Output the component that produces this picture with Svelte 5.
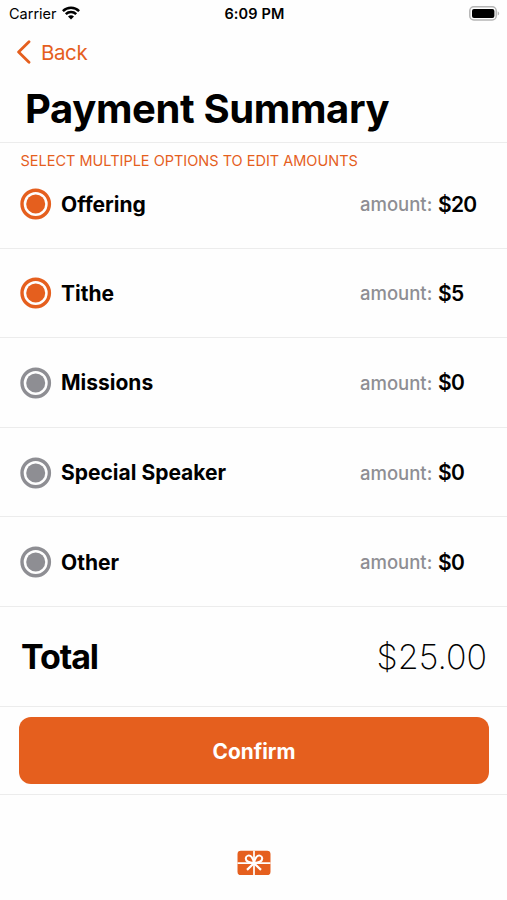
<script lang="ts">
  let funds = [
    { name: 'Offering', amount: 20, selected: true },
    { name: 'Tithe', amount: 5, selected: true },
    { name: 'Missions', amount: 0, selected: false },
    { name: 'Special Speaker', amount: 0, selected: false },
    { name: 'Other', amount: 0, selected: false },
  ];

  $: total = funds.reduce((sum, fund) => sum + fund.amount, 0);

  function toggle(index: number) {
    funds[index].selected = !funds[index].selected;
  }
</script>

<div class="screen">
  <div class="status-bar">
    <div class="carrier">
      <span>Carrier</span>
      <svg width="18" height="14" viewBox="0 0 18 14" fill="none" stroke="#000" stroke-width="2.5">
        <path d="M0.9 5.1a11.6 11.6 0 0 1 16.2 0" />
        <path d="M3.8 8.2a7.4 7.4 0 0 1 10.4 0" />
        <path d="M9 13.6L6 10.6a4.3 4.3 0 0 1 6 0z" fill="#000" stroke="none" />
      </svg>
    </div>
    <div class="time">6:09 PM</div>
    <svg class="battery" width="31" height="15" viewBox="0 0 31 15">
      <rect x="0.8" y="0.8" width="26.4" height="13.2" rx="4" fill="#fff" stroke="#b5b5b5" stroke-width="1.5" />
      <rect x="3" y="3" width="22.4" height="9" rx="2" fill="#000" />
      <path d="M28.7 5.2c2 .8 2 3.6 0 4.4z" fill="#b5b5b5" />
    </svg>
  </div>

  <button class="back">
    <svg width="15" height="24" viewBox="0 0 15 24" fill="none" stroke="currentColor" stroke-width="2.8" stroke-linecap="round" stroke-linejoin="round">
      <path d="M13 1.8L2.6 12 13 22.2" />
    </svg>
    <span>Back</span>
  </button>

  <h1>Payment Summary</h1>
  <p class="hint">SELECT MULTIPLE OPTIONS TO EDIT AMOUNTS</p>

  {#each funds as fund, i}
    <div class="row" class:first={i === 0}>
      <button class="radio" class:selected={fund.selected} aria-label={fund.name} on:click={() => toggle(i)}>
        <svg width="32" height="32" viewBox="0 0 32 32" fill="none">
          <circle cx="15.7" cy="16" r="13.7" stroke="currentColor" stroke-width="3.4" />
          <circle cx="15.7" cy="16" r="9.5" fill="currentColor" />
        </svg>
      </button>
      <span class="name">{fund.name}</span>
      <span class="label">amount:</span>
      <span class="amount">${fund.amount}</span>
    </div>
  {/each}

  <div class="total">
    <span class="total-label">Total</span>
    <span class="total-value">${total.toFixed(2)}</span>
  </div>

  <div class="actions">
    <button class="confirm">Confirm</button>
  </div>

  <div class="tab-bar">
    <svg width="34" height="26" viewBox="0 0 34 26" fill="none">
      <rect x="0.5" y="0.7" width="33" height="24.4" rx="3.4" fill="#e55f1e" />
      <g stroke="#fff" stroke-width="1.7">
        <path d="M17 0.7v24.4M0.5 13.2h33" />
        <path d="M17 13.2C12.500 12.800 8.600 11.200 8.800 8.100c.2-2.700 3.900-3.500 5.700-1.300C16 8.600 16.600 11 17 13.200c.4-2.200 1-4.600 2.500-6.400 1.800-2.200 5.500-1.400 5.700 1.300.2 3.100-3.700 4.700-8.200 5.100z" fill="#e55f1e" stroke-width="2" />
        <path d="M17 13.200l-7 6.700M17 13.200l7 6.700" stroke-width="2.200" />
      </g>
    </svg>
  </div>
</div>

<style>
  :global(body) {
    margin: 0;
    background: #fefefe;
  }

  .screen {
    width: 507px;
    height: 900px;
    display: flex;
    flex-direction: column;
    overflow: hidden;
    font-family: Inter, "Liberation Sans", sans-serif;
    color: #000;
    background: #fefefe;
  }

  button {
    border: 0;
    padding: 0;
    background: none;
    font-family: inherit;
    cursor: pointer;
  }

  svg {
    display: block;
    flex: none;
  }

  .status-bar {
    height: 28px;
    box-sizing: border-box;
    padding: 0 7px 2px 9px;
    display: grid;
    grid-template-columns: 1fr auto 1fr;
    align-items: center;
    font-size: 14.5px;
  }

  .carrier {
    display: flex;
    align-items: center;
    gap: 5px;
  }

  .time {
    font-weight: 600;
    letter-spacing: 0.15px;
  }

  .battery {
    justify-self: end;
  }

  .back {
    height: 48px;
    padding-left: 16px;
    display: flex;
    align-items: center;
    gap: 10px;
    color: #e55f1e;
    font-size: 20.5px;
    letter-spacing: -0.4px;
  }

  h1 {
    height: 66px;
    margin: 0;
    padding-left: 25px;
    border-bottom: 1px solid #ececec;
    font-size: 40px;
    font-weight: 700;
    letter-spacing: -0.37px;
    line-height: 66px;
  }

  .hint {
    height: 34px;
    margin: 0;
    padding-left: 20.5px;
    color: #e55f1e;
    font-size: 14.5px;
    line-height: 35px;
  }

  .row {
    height: 89.6px;
    box-sizing: border-box;
    padding: 1px 0 0 20px;
    display: flex;
    align-items: center;
    border-bottom: 1px solid #ececec;
  }

  .row.first {
    height: 71.6px;
    align-items: flex-start;
    padding-top: 11px;
    line-height: 33px;
  }

  .radio {
    color: #8e8e93;
  }

  .radio.selected {
    color: #e55f1e;
  }

  .name {
    width: 299px;
    padding-left: 9px;
    font-size: 21px;
    font-weight: 700;
  }

  .label {
    width: 78px;
    color: #8e8e93;
    font-size: 18.5px;
    font-weight: 500;
  }

  .amount {
    font-size: 21px;
    font-weight: 600;
    letter-spacing: -0.7px;
  }

  .total {
    height: 100px;
    box-sizing: border-box;
    padding: 1px 20px 0 21px;
    display: flex;
    align-items: center;
    justify-content: space-between;
    border-bottom: 1px solid #ececec;
  }

  .total-label {
    font-size: 34px;
    font-weight: 700;
    letter-spacing: -1.1px;
  }

  .total-value {
    font-size: 34px;
    font-weight: 200;
  }

  .actions {
    height: 88px;
    box-sizing: border-box;
    padding: 10px 18px 10px 19px;
    border-bottom: 1px solid #ececec;
  }

  .confirm {
    width: 100%;
    height: 67px;
    padding-top: 2px;
    border-radius: 12px;
    background: #e55f1e;
    color: #fff;
    font-size: 20.8px;
    font-weight: 700;
  }

  .tab-bar {
    flex: 1;
    padding-top: 55px;
    display: flex;
    justify-content: center;
    align-items: flex-start;
  }
</style>
